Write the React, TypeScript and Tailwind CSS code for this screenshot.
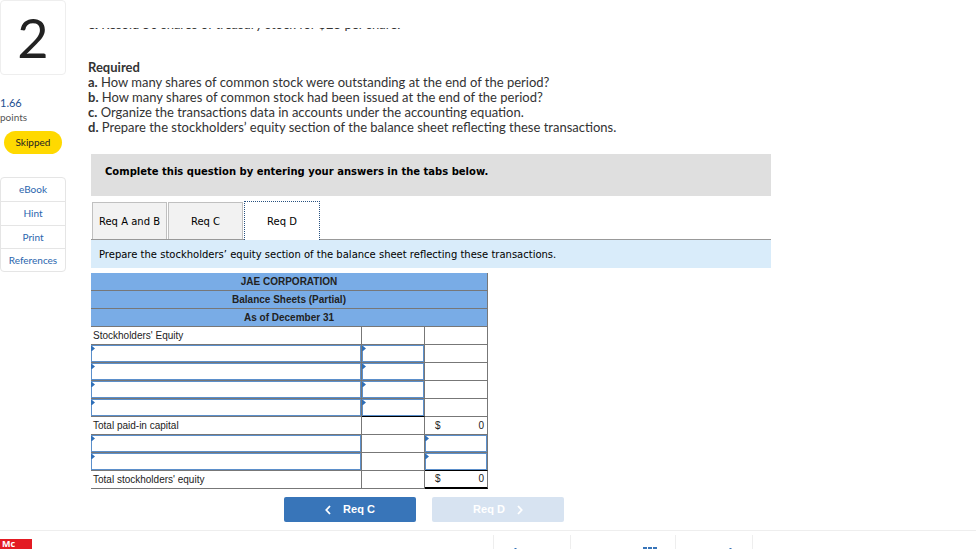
import { ReactNode } from "react";

const resources = [
  { name: "eBook", height: "h-6" },
  { name: "Hint", height: "h-6" },
  { name: "Print", height: "h-[23px]" },
  { name: "References", height: "h-[22px]" },
];

const requirements = [
  ["a.", "How many shares of common stock were outstanding at the end of the period?"],
  ["b.", "How many shares of common stock had been issued at the end of the period?"],
  ["c.", "Organize the transactions data in accounts under the accounting equation."],
  ["d.", "Prepare the stockholders’ equity section of the balance sheet reflecting these transactions."],
];

const cell = "h-[18px] p-0 border-r border-b border-[#777]";

function Entry({ label }: { label: string }) {
  return (
    <div className="relative h-[17px]">
      <input
        aria-label={label}
        className="block h-[17px] w-full border border-[#5b8fcb] bg-white px-1 text-[10px] outline-none"
      />
      <svg className="absolute left-0 top-px" width="4" height="5" viewBox="0 0 4 5" aria-hidden="true">
        <path d="M0 0H1L4 2.5L1 5H0Z" fill="#2f6fb8" />
      </svg>
    </div>
  );
}

function Money() {
  return (
    <div className="flex justify-between pl-[10px] pr-[3px] leading-[16px]">
      <span>$</span>
      <span>0</span>
    </div>
  );
}

function Row({ children }: { children: ReactNode }) {
  return <tr>{children}</tr>;
}

function BalanceSheet() {
  return (
    <table className="mt-[5px] w-[397px] table-fixed border-separate border-spacing-0 font-['Liberation_Sans',Arial,sans-serif] text-[10px] leading-[17px] text-[#222]">
      <colgroup>
        <col />
        <col className="w-[63px]" />
        <col className="w-[63px]" />
      </colgroup>
      <thead>
        {["JAE CORPORATION", "Balance Sheets (Partial)", "As of December 31"].map((t) => (
          <tr key={t}>
            <th colSpan={3} className={`${cell} bg-[#79ace6] font-bold`}>
              {t}
            </th>
          </tr>
        ))}
      </thead>
      <tbody>
        <Row>
          <td className={`${cell} pl-[2px]`}>Stockholders' Equity</td>
          <td className={cell} />
          <td className={cell} />
        </Row>
        {[1, 2, 3, 4].map((n) => (
          <Row key={n}>
            <td className={cell}>
              <Entry label={`Paid-in capital account ${n}`} />
            </td>
            <td className={n === 4 ? "h-[18px] border-r border-b border-r-[#777] border-b-black p-0" : cell}>
              <Entry label={`Paid-in capital amount ${n}`} />
            </td>
            <td className={cell} />
          </Row>
        ))}
        <Row>
          <td className={`${cell} pl-[2px]`}>Total paid-in capital</td>
          <td className={cell} />
          <td className={cell}>
            <Money />
          </td>
        </Row>
        {[1, 2].map((n) => (
          <Row key={n}>
            <td className={cell}>
              <Entry label={`Equity account ${n}`} />
            </td>
            <td className={cell} />
            <td className={n === 2 ? "h-[18px] border-r border-b border-r-[#777] border-b-black p-0" : cell}>
              <Entry label={`Equity amount ${n}`} />
            </td>
          </Row>
        ))}
        <Row>
          <td className={`${cell} pl-[2px]`}>Total stockholders' equity</td>
          <td className={cell} />
          <td className="h-[18px] border-r border-b-2 border-r-[#777] border-b-black p-0">
            <Money />
          </td>
        </Row>
      </tbody>
    </table>
  );
}

function Chevron({ dir }: { dir: "left" | "right" }) {
  return (
    <svg width="6" height="10" viewBox="0 0 6 10" fill="none" stroke="currentColor" strokeWidth="1.8" aria-hidden="true">
      <path d={dir === "left" ? "M5 1L1.3 5L5 9" : "M1 1L4.7 5L1 9"} />
    </svg>
  );
}

export default function App() {
  return (
    <div className="flex h-screen flex-col overflow-hidden bg-white font-['Lato',sans-serif] text-[#222]">
      <div className="flex min-h-0 flex-1">
        <aside className="w-[66px] shrink-0">
          <div className="flex h-[75px] items-center justify-center rounded border border-[#eee] text-[54px] leading-none">
            2
          </div>
          <div className="mt-[21px] text-[11px] leading-[14px] text-[#1d4f91]">1.66</div>
          <div className="text-[10px] leading-[14px] text-[#555]">points</div>
          <div className="mx-1 mt-[7px] h-[23px] rounded-full bg-[#ffd900] text-center text-[10px] leading-[23px]">
            Skipped
          </div>
          <nav className="mt-[23px] divide-y divide-[#e5e5e5] rounded border border-[#e5e5e5] text-center text-[10px] leading-[22px] text-[#2a66ae]">
            {resources.map((r) => (
              <a key={r.name} href="#" className={`block ${r.height}`}>
                {r.name}
              </a>
            ))}
          </nav>
        </aside>

        <main className="ml-[22px] mt-7 min-w-0 flex-1 overflow-hidden text-[13px] leading-[15px] text-[#333]">
          <p className="-mt-[11px]">
            <b>e.</b> Resold 50 shares of treasury stock for $25 per share.
          </p>
          <h2 className="mt-7 font-bold">Required</h2>
          {requirements.map(([k, t]) => (
            <p key={k}>
              <b>{k}</b> {t}
            </p>
          ))}

          <section className="ml-[3px] mt-[19px] max-w-[680px] font-['DejaVu_Sans',Verdana,sans-serif] text-[10px] text-black">
            <div className="h-[42px] bg-[#dfdfdf] px-[14px] font-bold leading-[35px]">
              Complete this question by entering your answers in the tabs below.
            </div>
            <div role="tablist" className="mt-[6px] flex h-[38px] gap-px border-b border-[#999] pl-px">
              <button role="tab" className="w-[75px] border border-b-0 border-[#c0c0c0] bg-[#f2f2f2]">
                Req A and B
              </button>
              <button role="tab" className="w-[75px] border border-b-0 border-[#c0c0c0] bg-[#f2f2f2]">
                Req C
              </button>
              <button
                role="tab"
                aria-selected="true"
                className="-mb-px -mt-px w-[76px] border border-b-0 border-dotted border-[#27507f] bg-white"
              >
                Req D
              </button>
            </div>
            <div className="h-7 bg-[#d9ecfa] px-2 leading-[29px]">
              Prepare the stockholders’ equity section of the balance sheet reflecting these transactions.
            </div>
            <BalanceSheet />
            <div className="ml-[193px] mt-2 flex gap-4 font-['Liberation_Sans',Arial,sans-serif] text-[11px] font-bold text-white">
              <button className="flex h-[25px] w-[132px] items-center justify-center gap-3 rounded-xs bg-[#3875b9]">
                <Chevron dir="left" />
                Req C
              </button>
              <button disabled className="flex h-[25px] w-[132px] items-center justify-center gap-3 rounded-xs bg-[#d7e3f1]">
                Req D
                <Chevron dir="right" />
              </button>
            </div>
          </section>
        </main>
      </div>

      <footer className="flex h-[19px] shrink-0 overflow-hidden border-t border-[#eee]">
        <div className="flex-1 pt-2">
          <div className="h-[10px] w-8 bg-[#e31b23] pl-[2px] font-['Open_Sans',sans-serif] text-[9px] font-bold leading-[10px] text-white">
            Mc
          </div>
        </div>
        <div className="mr-[223px] mt-1 flex text-[#3875b9]">
          <div className="flex w-[77px] items-end border-l border-[#eee] pl-[20px]">
            <svg width="3" height="1" viewBox="0 0 3 1" aria-hidden="true">
              <path d="M0 1L1 0H2L3 1Z" fill="currentColor" />
            </svg>
          </div>
          <div className="flex w-[105px] items-end border-l border-[#eee] pl-[72px]">
            <svg width="14" height="2" viewBox="0 0 14 2" aria-hidden="true">
              <path d="M0 0H4V2H0ZM5 0H9V2H5ZM10 0H14V2H10Z" fill="currentColor" />
            </svg>
          </div>
          <div className="flex w-[78px] items-end border-x border-[#eee] pl-[53px]">
            <svg width="3" height="1" viewBox="0 0 3 1" aria-hidden="true">
              <path d="M0 1L1 0H2L3 1Z" fill="currentColor" />
            </svg>
          </div>
        </div>
      </footer>
    </div>
  );
}
